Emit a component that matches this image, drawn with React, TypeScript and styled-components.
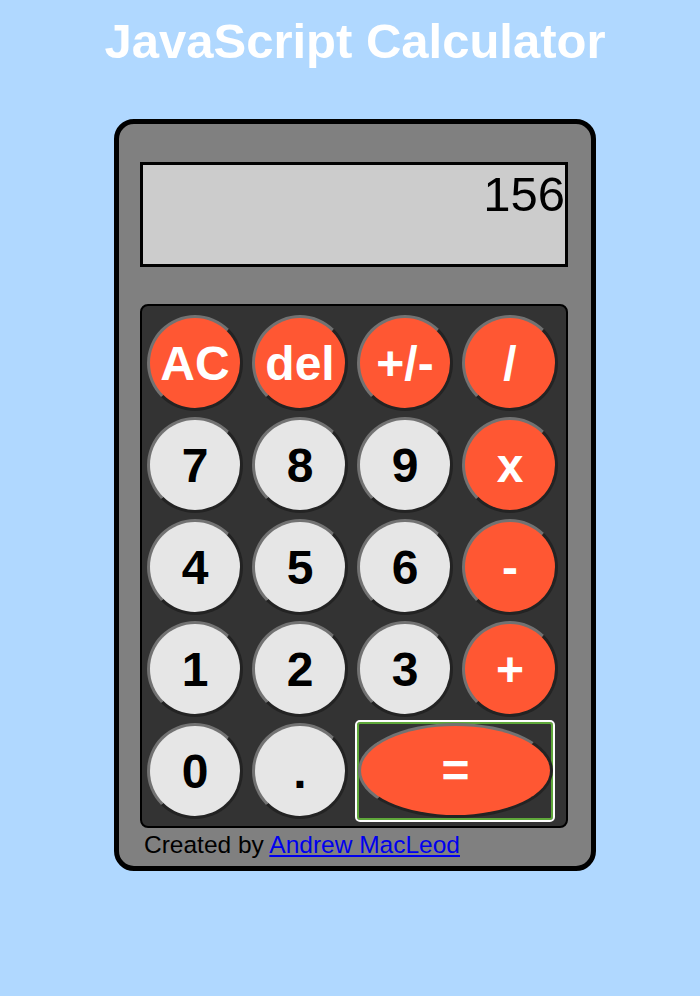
import React from "react";
import styled, { createGlobalStyle } from "styled-components";

const GlobalStyle = createGlobalStyle`
  html, body {
    margin: 0;
    padding: 0;
    background: #b0d8ff;
    font-family: "Liberation Sans", Arial, Helvetica, sans-serif;
  }
`;

const Page = styled.div`
  padding-left: 10px;
  min-height: 996px;
  box-sizing: border-box;
  display: flex;
  flex-direction: column;
  align-items: center;
`;

const Title = styled.h1`
  margin: 0;
  padding-top: 12px;
  font-size: 49px;
  line-height: 58px;
  font-weight: bold;
  color: #ffffff;
  text-align: center;
`;

const Calculator = styled.div`
  margin-top: 49px;
  width: 482px;
  height: 752px;
  box-sizing: border-box;
  background: #808080;
  border: 5px solid #000;
  border-radius: 20px;
  padding: 38px 0 0 21px;
  display: flex;
  flex-direction: column;
  align-items: flex-start;
`;

const Display = styled.div`
  width: 428px;
  height: 105px;
  box-sizing: border-box;
  background: #cccccc;
  border: 3px solid #000;
  padding-right: 0;
  padding-top: 1px;
  font-size: 49px;
  text-align: right;
  color: #000;
`;

const Keypad = styled.div`
  margin-top: 37px;
  width: 428px;
  height: 524px;
  box-sizing: border-box;
  background: #333333;
  border: 2px solid #000;
  border-radius: 8px;
  padding: 9px 0 0 5px;
  display: grid;
  grid-template-columns: repeat(4, 96px);
  grid-auto-rows: 96px;
  column-gap: 9px;
  row-gap: 6px;
`;

const Key = styled.button<{ $variant: "op" | "num" }>`
  width: 96px;
  height: 96px;
  box-sizing: border-box;
  border-radius: 50%;
  border: 3px solid;
  border-color: #727272 #232323 #232323 #727272;
  background: ${(p) => (p.$variant === "op" ? "#ff5733" : "#e6e6e6")};
  color: ${(p) => (p.$variant === "op" ? "#ffffff" : "#000000")};
  font-family: "Liberation Sans", Arial, Helvetica, sans-serif;
  font-size: 48px;
  font-weight: bold;
  padding: 0;
  display: flex;
  align-items: center;
  justify-content: center;
  cursor: pointer;
`;

const EqualsSlot = styled.div`
  grid-column: span 2;
  margin: -3px 3px -3px -2px;
  border: 2px solid #ffffff;
  border-radius: 5px;
  box-shadow: inset 0 0 0 2px #5fa83a;
  padding: 1px 0 1px 1px;
  display: flex;
`;

const EqualsKey = styled(Key)`
  width: 100%;
  height: 95px;
`;

const Footer = styled.div`
  margin-top: 3px;
  padding-left: 4px;
  font-size: 24.5px;
  color: #000;
`;

const Link = styled.a`
  color: #0000ee;
  text-decoration: underline;
`;

type K = { label: string; variant: "op" | "num" };

const keys: K[] = [
  { label: "AC", variant: "op" },
  { label: "del", variant: "op" },
  { label: "+/-", variant: "op" },
  { label: "/", variant: "op" },
  { label: "7", variant: "num" },
  { label: "8", variant: "num" },
  { label: "9", variant: "num" },
  { label: "x", variant: "op" },
  { label: "4", variant: "num" },
  { label: "5", variant: "num" },
  { label: "6", variant: "num" },
  { label: "-", variant: "op" },
  { label: "1", variant: "num" },
  { label: "2", variant: "num" },
  { label: "3", variant: "num" },
  { label: "+", variant: "op" },
  { label: "0", variant: "num" },
  { label: ".", variant: "num" },
];

export default function App() {
  return (
    <>
      <GlobalStyle />
      <Page>
        <Title>JavaScript Calculator</Title>
        <Calculator>
          <Display>156</Display>
          <Keypad>
            {keys.map((k) => (
              <Key key={k.label} $variant={k.variant}>
                {k.label}
              </Key>
            ))}
            <EqualsSlot>
              <EqualsKey $variant="op">=</EqualsKey>
            </EqualsSlot>
          </Keypad>
          <Footer>
            Created by <Link href="#">Andrew MacLeod</Link>
          </Footer>
        </Calculator>
      </Page>
    </>
  );
}
